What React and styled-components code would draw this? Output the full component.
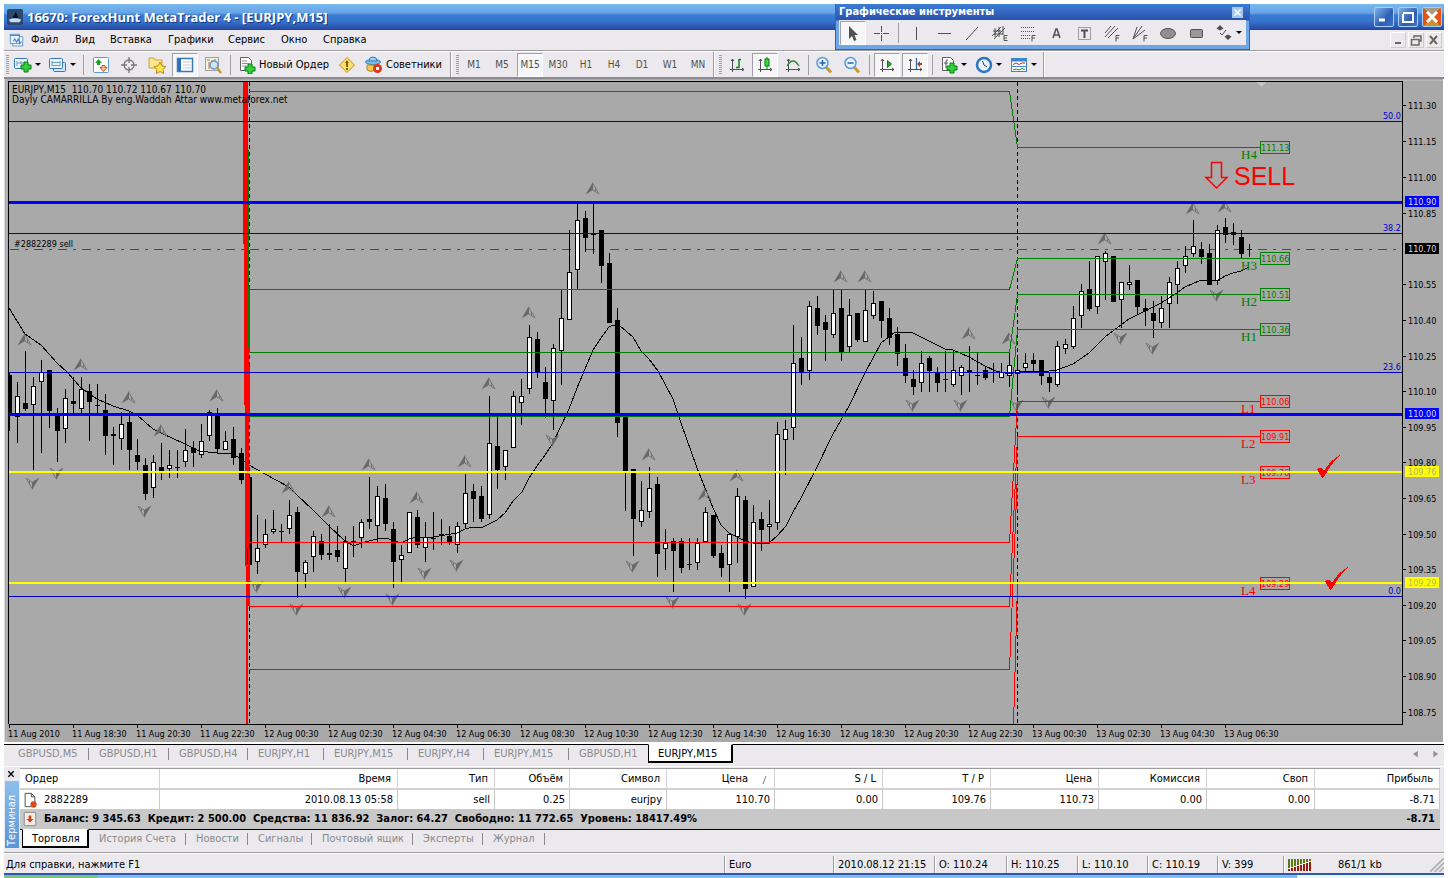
import React from 'react';
import styled, { createGlobalStyle, css } from 'styled-components';

const Global = createGlobalStyle`
  * { box-sizing: border-box; }
  body { margin: 0; background: #fff; }
  button { font: inherit; color: inherit; margin: 0; padding: 0; border: 0; background: none; }
`;

const UI_FONT = '"DejaVu Sans Condensed", "DejaVu Sans", sans-serif';
const FACE = '#ebe9ed';
const GREEN = '#008000';
const RED = '#ff0000';
const BLUE = '#0000cd';

/* ---------- window frame ---------- */
const Page = styled.div`
  position: relative;
  padding: 4px 4px 0;
  font: 11px/14px ${UI_FONT};
  color: #000;
  svg { display: block; flex: none; }
`;
const TitleBar = styled.header`
  display: flex;
  align-items: center;
  height: 26px;
  padding: 0 2px 0 3px;
  background: linear-gradient(#78b9ee 0, #66a3e8 9px, #3a7dd2 11px, #3874cc 17px, #2a52ad 24px, #1f4399 26px);
`;
const Title = styled.h1`
  flex: 1;
  margin: 0 0 0 4px;
  font: bold 13px/22px "Open Sans", sans-serif;
  color: #fff;
  text-shadow: 1px 1px 0 #123a80;
  white-space: pre;
`;
const WinButtons = styled.div`
  display: flex;
  gap: 4px;
`;
const WinButton = styled.button`
  display: grid;
  place-items: center;
  width: 20px;
  height: 20px;
  border: 1px solid #a9cdf2;
  border-radius: 2px;
  background: ${p => (p.$close ? 'conic-gradient(#a89a80 0 12%, #e05414 0 38%, #c9922c 0 62%, #e05414 0 88%, #a89a80 0)' : 'linear-gradient(135deg, #7fb0e6, #2c5fb4 60%, #3f74c4)')};
`;
const MenuBar = styled.nav`
  display: flex;
  align-items: center;
  height: 20px;
  padding-left: 5px;
  background: ${FACE};
`;
const MenuItems = styled.div`
  display: flex;
  flex: 1;
  margin-left: 1px;
`;
const MenuItem = styled.button`
  width: ${p => p.$w}px;
  padding-left: 6px;
  text-align: left;
  white-space: nowrap;
`;
const ChildButton = styled.button`
  display: grid;
  place-items: center;
  width: 16px;
  height: 16px;
  margin-right: 2px;
  border: 1px solid #fff;
  border-right-color: #ccc;
  border-bottom-color: #ccc;
`;

/* ---------- tool bars ---------- */
const ToolRow = styled.div`
  display: flex;
  height: 29px;
  padding-top: 1px;
  border-top: 1px solid #9c9c9c;
  border-bottom: 2px solid #8c8c90;
  background: ${FACE};
  box-shadow: inset 0 1px #fff;
`;
const ToolGroup = styled.div`
  display: flex;
  align-items: center;
  padding-right: ${p => p.$end || 0}px;
  border-right: 1px solid #9c9ca0;
  margin-right: 3px;
  box-shadow: 1px 0 #fff;
`;
const Grip = styled.span`
  width: 3px;
  height: 20px;
  margin: 0 1px 0 2px;
  background: repeating-linear-gradient(#a0a0a4 0 1px, transparent 1px 2px);
`;
const Divider = styled.span`
  width: 1px;
  height: 20px;
  margin: 0 ${p => (p.$tight ? 1 : 3)}px;
  background: #a0a0a4;
`;
const Tool = styled.button`
  display: flex;
  align-items: center;
  justify-content: ${p => (p.$start ? 'flex-start' : 'center')};
  gap: 3px;
  width: ${p => p.$w || 28}px;
  height: 24px;
  padding-left: ${p => (p.$start ? 4 : 0)}px;
  white-space: nowrap;
  ${p => p.$dim && css`
    font-size: 10px;
    color: #505050;
  `}
  ${p => p.$on && css`
    width: 26px;
    margin: 0 1px;
    border: 1px solid #a0a0a4;
    border-right-color: #fff;
    border-bottom-color: #fff;
    background: #f6f5f7;
  `}
`;
const Caret = styled.span`
  border: 3px solid transparent;
  border-top-color: #000;
  border-bottom-width: 0;
`;
const Palette = styled.section`
  position: absolute;
  top: 4px;
  right: 198px;
  width: 415px;
  padding: 0 3px 4px;
  border: 1px solid #2e64bc;
  border-top: 0;
  background: linear-gradient(#3a7dd2, #2a52ad 16px, #6ea6e6 17px);
`;
const PaletteHead = styled.div`
  display: flex;
  align-items: center;
  justify-content: space-between;
  height: 16px;
  font-weight: bold;
  color: #fff;
`;
const PaletteClose = styled.button`
  display: grid;
  place-items: center;
  width: 11px;
  height: 11px;
  margin-right: 3px;
  background: #a4c8f0;
`;
const PaletteBody = styled.div`
  display: flex;
  align-items: center;
  height: 25px;
  background: ${FACE};
`;

/* ---------- chart ---------- */
const ChartPane = styled.main`
  background: #a9a9a9;
  border-left: 1px solid #d8d8da;
  margin-right: 1px;
  svg { width: 100%; height: auto; }
`;

/* ---------- tabs ---------- */
const ChartTabs = styled.nav`
  display: flex;
  height: 22px;
  margin-top: 2px;
  padding-left: 4px;
  background: ${FACE};
  border-top: 1px solid #000;
  color: #8a8a8c;
`;
const TabButton = styled.button`
  width: ${p => p.$w}px;
  height: 18px;
  padding-left: 10px;
  text-align: left;
  white-space: nowrap;
  background: linear-gradient(#8a8a8c, #8a8a8c) right center / 1px 12px no-repeat;
  ${p => p.$bare && css`background: none;`}
  ${p => p.$on && css`
    height: 19px;
    margin-top: -1px;
    padding: 1px 0 0 9px;
    background: #fff;
    color: #000;
    border: 1px solid #000;
    border-top-color: #fff;
    border-right-width: 2px;
    border-bottom-width: 2px;
  `}
`;
const Spacer = styled.span`
  flex: 1;
`;
const Scrollers = styled.div`
  display: flex;
  align-items: center;
  gap: 8px;
  height: 18px;
  margin-right: 4px;
`;

/* ---------- terminal ---------- */
const Terminal = styled.section`
  display: flex;
  height: 86px;
  border-top: 1px solid #fff;
  background: ${FACE};
`;
const TerminalSide = styled.aside`
  display: flex;
  flex-direction: column;
  align-items: center;
  width: 16px;
  padding-top: 2px;
`;
const SideClose = styled.button`
  height: 9px;
  margin-right: 2px;
`;
const SideTitle = styled.div`
  width: 14px;
  height: 67px;
  margin: 3px 1px 0 0;
  padding-top: 2px;
  writing-mode: vertical-rl;
  transform: rotate(180deg);
  color: #fff;
  background: linear-gradient(#5a94d6, #8cc0ee);
`;
const TerminalBody = styled.div`
  flex: 1;
  margin: 1px 4px 0 0;
  border-top: 1px solid #9c9c9c;
`;
const Orders = styled.table`
  width: 100%;
  table-layout: fixed;
  border-collapse: separate;
  border-spacing: 0;
  background: #fff;
  white-space: nowrap;
`;
const Head = styled.th`
  height: 21px;
  padding: 0 ${p => (p.$sorted ? 26 : 6)}px 0 5px;
  font-weight: normal;
  text-align: ${p => (p.$left ? 'left' : 'right')};
  border-right: 1px solid #d4d0d4;
  border-bottom: 2px solid #d4d0d4;
`;
const Cell = styled.td`
  height: 19px;
  padding: 0 4px 0 2px;
  text-align: right;
  border-right: 1px solid #c8c8c8;
`;
const Sum = styled.td`
  height: 21px;
  padding: 0 5px 0 2px;
  font-weight: bold;
  text-align: ${p => (p.$right ? 'right' : 'left')};
  background: #c8c8c8;
  border-bottom: 1px solid #000;
`;
const WithIcon = styled.div`
  display: flex;
  align-items: center;
  gap: 6px;
`;
const SortMark = styled.svg`
  float: right;
  margin: 4px -20px 0 0;
`;
const BottomTabs = styled.nav`
  display: flex;
  margin-left: 2px;
  color: #8a8a8c;
`;
const StatusBar = styled.footer`
  display: flex;
  align-items: center;
  height: 21px;
  padding-top: 3px;
  border-top: 1px solid #9c9c9c;
  background: ${FACE};
  box-shadow: inset 0 1px #fff;
`;
const Hint = styled.span`
  flex: 1;
  padding-left: 2px;
`;
const Field = styled.span`
  display: flex;
  align-items: center;
  width: ${p => p.$w}px;
  height: 17px;
  padding-left: 4px;
  white-space: nowrap;
  border-left: 1px solid #9c9c9c;
  box-shadow: inset 1px 0 #fff;
`;
const Traffic = styled.span`
  margin-left: 26px;
`;
const Shelf = styled.div`
  height: 5px;
  border-top: 2px solid #2a58b4;
  background: linear-gradient(90deg, #7cc47c 0 94px, #84bcec 94px calc(100% - 147px), #eaf6fc 0);
`;

/* ---------- chart data: [high, body top, body bottom, low, kind] ---------- */
const CANDLES = [
  [372,375,413,431,'B'],[382,396,417,443,'W'],[351,403,409,411,'B'],[377,386,405,470,'W'],[360,372,382,453,'W'],
  [370,370,411,428,'B'],[408,414,431,462,'B'],[389,398,429,443,'W'],[377,401,404,413,'B'],[377,389,409,413,'W'],
  [384,391,402,441,'B'],[384,405,406,413,'B'],[394,410,436,455,'B'],[427,434,436,465,'B'],[412,424,439,450,'W'],
  [411,422,450,470,'B'],[439,455,462,470,'B'],[458,465,494,500,'B'],[455,462,488,498,'W'],[443,467,471,480,'B'],
  [450,465,469,478,'W'],[450,467,468,478,'B'],[429,450,462,467,'W'],[441,448,453,467,'B'],[424,441,455,458,'W'],
  [410,412,436,441,'W'],[408,414,449,453,'B'],[431,441,450,450,'W'],[427,439,458,465,'B'],[448,453,480,484,'B'],
  [477,477,565,565,'B'],[515,548,562,574,'W'],[519,534,545,548,'W'],[510,529,532,534,'W'],[524,531,532,543,'B'],
  [500,515,529,534,'W'],[507,512,572,598,'B'],[560,562,574,588,'W'],[531,536,557,572,'W'],[534,541,555,560,'B'],
  [524,553,555,560,'B'],[526,550,557,562,'B'],[536,541,569,582,'W'],[526,541,543,557,'B'],[519,522,538,548,'W'],
  [477,519,522,529,'B'],[486,496,526,543,'W'],[484,498,524,531,'B'],[522,529,562,588,'B'],[545,555,560,582,'W'],
  [512,512,553,553,'W'],[510,517,545,548,'B'],[522,537,548,562,'W'],[512,538,539,550,'B'],[519,534,536,545,'B'],
  [526,536,543,545,'B'],[522,526,545,553,'W'],[474,493,524,529,'W'],[484,491,499,522,'B'],[486,496,519,522,'B'],
  [396,443,515,519,'W'],[416,446,470,489,'B'],[450,450,467,480,'W'],[391,396,448,448,'W'],[379,396,403,425,'W'],
  [325,337,389,394,'W'],[332,339,372,378,'B'],[367,382,399,418,'B'],[344,348,401,430,'W'],[290,318,351,385,'W'],
  [230,272,320,320,'W'],[204,220,270,289,'W'],[211,218,238,252,'B'],[204,234,235,254,'B'],[230,230,266,283,'B'],
  [253,263,323,323,'B'],[308,320,423,437,'B'],[416,416,471,511,'B'],[469,469,519,556,'B'],[481,510,522,527,'W'],
  [467,488,512,518,'W'],[477,484,554,577,'B'],[529,543,549,570,'W'],[538,541,551,592,'B'],[538,541,568,573,'B'],
  [538,564,565,570,'B'],[538,543,563,570,'W'],[507,512,542,542,'W'],[515,515,556,558,'B'],[545,553,568,577,'B'],
  [534,534,565,592,'W'],[488,496,537,563,'W'],[496,500,589,599,'B'],[505,522,587,587,'W'],[512,519,530,551,'B'],
  [500,524,527,544,'W'],[422,434,523,530,'W'],[420,429,440,475,'W'],[325,363,428,440,'W'],[337,358,373,385,'B'],
  [301,306,371,380,'W'],[296,308,326,335,'B'],[315,322,330,361,'B'],[290,313,335,338,'W'],[290,308,352,361,'B'],
  [299,315,347,352,'W'],[313,313,340,342,'B'],[290,310,342,342,'W'],[291,303,316,319,'W'],[301,301,321,338,'B'],
  [308,318,338,345,'B'],[327,334,354,366,'B'],[344,358,376,383,'B'],[370,379,387,395,'B'],[351,363,383,392,'W'],
  [356,358,371,392,'B'],[367,373,383,392,'B'],[351,379,380,392,'B'],[351,370,385,387,'W'],[365,367,376,395,'W'],
  [346,370,373,392,'B'],[353,375,376,385,'B'],[366,370,378,380,'B'],[363,372,373,383,'B'],[363,372,378,378,'W'],
  [353,365,376,387,'W'],[356,370,374,395,'W'],[353,363,368,372,'W'],[353,360,364,372,'B'],[360,360,376,385,'B'],
  [372,377,383,392,'B'],[341,346,385,387,'W'],[339,344,349,354,'W'],[306,318,347,349,'W'],[284,291,316,328,'W'],
  [261,289,309,311,'B'],[256,256,307,314,'W'],[251,253,262,300,'W'],[256,256,302,302,'B'],[282,282,300,328,'W'],
  [265,282,285,290,'W'],[280,280,307,314,'B'],[299,308,311,326,'B'],[301,313,321,338,'B'],[296,308,323,328,'W'],
  [277,282,304,328,'W'],[261,268,285,304,'W'],[246,256,266,273,'W'],[220,246,254,257,'W'],[242,249,257,264,'B'],
  [244,253,285,285,'B'],[225,230,281,285,'W'],[218,227,235,243,'B'],[223,232,235,245,'B'],[230,237,254,258,'B'],
  [244,249,250,257,'B'],
];
const AVERAGE = '9,308 25,334 41,345 57,363 67,372 81,388 97,399 113,406 129,411 137,415 153,429 161,433 185,444 199,451 217,453 233,454 241,459 249,465 265,474 289,487 297,495 313,510 329,526 345,541 354,546 361,543 377,539 385,538 393,540 401,543 409,539 417,537 433,537 457,533 465,529 473,527 483,527 497,520 505,513 513,501 522,492 529,478 537,466 545,455 553,443 561,426 569,409 577,388 593,350 601,338 609,327 613,325 620,326 633,337 641,351 649,359 658,371 673,399 681,423 697,468 713,508 721,525 729,533 737,537 745,541 753,543 761,544 769,543 777,536 786,526 793,512 801,498 817,467 833,434 849,406 865,373 881,343 895,332 903,332 913,333 929,341 945,349 953,350 969,357 985,366 996,371 1009,374 1025,371 1049,371 1057,370 1065,367 1073,364 1089,353 1105,337 1121,325 1129,319 1145,311 1161,303 1177,293 1185,287 1201,280 1217,281 1225,276 1233,273 1241,271 1249,267';
const TOPS = [[24,333],[80,358],[128,391],[160,424],[216,389],[288,481],[328,505],[368,458],[416,491],[464,455],[488,377],[528,306],[592,182],[648,448],[704,488],[736,469],[840,270],[864,270],[968,327],[1008,332],[1104,232],[1192,202],[1224,200]];
const BOTTOMS = [[32,490],[56,480],[144,518],[256,593],[296,616],[344,599],[392,606],[424,580],[456,572],[552,447],[632,573],[672,609],[744,616],[912,412],[960,412],[1016,412],[1048,409],[1120,345],[1152,355],[1216,302]];
const LEVELS = [
  ['H4','111.13',147,91,GREEN],['H3','110.66',258,289,GREEN],['H2','110.51',294,352,GREEN],['H1','110.36',329,416,GREEN],
  ['L1','110.06',401,542,RED],['L2','109.91',436,606,RED],['L3','109.76',472,669,RED],['L4','109.29',583,867,RED],
];
const PRICES = [['111.30',105],['111.15',141],['111.00',177],['110.85',213],['110.55',284],['110.40',320],['110.25',356],['110.10',391],['109.95',427],['109.80',462],['109.65',498],['109.50',534],['109.35',569],['109.20',605],['109.05',640],['108.90',676],['108.75',712]];
const BADGES = [['110.90',202,'#0000ff'],['110.70',249,'#000'],['110.00',414,'#0000ff'],['109.76',472,'#ffff00'],['109.29',583,'#ffff00']];
const TIMES = ['11 Aug 2010','11 Aug 18:30','11 Aug 20:30','11 Aug 22:30','12 Aug 00:30','12 Aug 02:30','12 Aug 04:30','12 Aug 06:30','12 Aug 08:30','12 Aug 10:30','12 Aug 12:30','12 Aug 14:30','12 Aug 16:30','12 Aug 18:30','12 Aug 20:30','12 Aug 22:30','13 Aug 00:30','13 Aug 02:30','13 Aug 04:30','13 Aug 06:30'];
const FIBS = [['50.0',121],['38.2',233],['23.6',372],['0.0',596]];

function Candle({ x, data }) {
  const [high, top, bottom, low, kind] = data;
  const thin = bottom - top <= 1;
  return (
    <g>
      <rect x={x} y={high} width="1" height={Math.max(low - high, 1)} fill="#000" />
      <rect x={x - 2} y={top} width="5" height={thin ? 1 : bottom - top} fill="#000" />
      {kind === 'W' && <rect x={x - 1} y={top + 1} width="3" height={bottom - top - 2} fill="#fff" />}
    </g>
  );
}

function Fractal({ x, y, down }) {
  return (
    <g transform={`translate(${x + 0.5} ${y})${down ? ' rotate(180)' : ''}`} shapeRendering="geometricPrecision">
      <path d="M.5 0L-7 12.500L.5 8Z" fill="#696969" />
      <path d="M.5 1.500L6.500 12L.5 8M3 6v3" fill="none" stroke="#747474" />
    </g>
  );
}

function Chart() {
  return (
    <svg viewBox="5 79 1438 663" fontFamily={UI_FONT} fontSize="9" shapeRendering="crispEdges">
      <rect x="8" y="80" width="1436" height="1" fill="#bcbcbc" />
      <rect x="6" y="80" width="1" height="662" fill="#b8b8bc" />
      <clipPath id="plot"><rect x="9" y="82" width="1393" height="642" /></clipPath>
      <g clipPath="url(#plot)">
        <path d="M10 249.500H1402" stroke={GREEN} strokeDasharray="9 6 3 6" />
        <path d="M249.500 82V724M1017.500 82V724" stroke="#000" strokeDasharray="4 3" />
        {CANDLES.map((c, i) => <Candle key={i} x={9 + i * 8} data={c} />)}
        <polyline points={AVERAGE} fill="none" stroke="#000" />
        {TOPS.map(([x, y]) => <Fractal key={`${x}`} x={x} y={y} />)}
        {BOTTOMS.map(([x, y]) => <Fractal key={`${x}`} x={x} y={y} down />)}
        <g fill="none">
          <path d="M246 82L249 420M247 82L249 352" stroke={GREEN} strokeWidth="2" />
          <path d="M243.500 82L247.500 724M244.500 82L249 606M245.500 82L249 542" stroke={RED} strokeWidth="2" />
          {LEVELS.map(([name, , now, before, color]) => (
            <path key={name} stroke={color} d={`M249 ${before + 0.5}H1009.500L1017.500 ${now + 0.5}H1260`} />
          ))}
        </g>
        {FIBS.map(([t, y]) => <rect key={t} x="9" y={y} width="1393" height="1" fill={BLUE} />)}
        {LEVELS.map(([name, price, y, , color]) => (
          <g key={name} fill={color}>
            <rect x="1260.500" y={y - 5.5} width="29" height="12" fill="none" stroke={color} />
            <text x="1261" y={y + 4}>{price}</text>
            <text x="1241" y={y + 12} fontFamily='"Liberation Serif", serif' fontSize="13">{name}</text>
          </g>
        ))}
        <rect x="9" y="201" width="1393" height="3" fill="#0000ff" />
        <rect x="9" y="413" width="1393" height="3" fill="#0000ff" />
        <rect x="9" y="471" width="1393" height="2" fill="#ffff00" />
        <rect x="9" y="582" width="1393" height="2" fill="#ffff00" />
        <path d="M1256 82h10l-5 5Z" fill="#c4c4c4" />
        <path d="M1211.500 162.500h10v15h5.500L1216.500 188L1206 177.500h5.500Z" fill="none" stroke={RED} strokeWidth="1.500" shapeRendering="geometricPrecision" />
        <text x="1234" y="185" fill={RED} fontSize="25" fontFamily='"Liberation Sans", sans-serif'>SELL</text>
        <g fill={RED}>
          <path id="tick" d="M1317 469q2-2 4-1l3 3q6-11 18-17q-10 8-15 18q-2 4-5 6z" />
          <use href="#tick" x="8" y="112" />
        </g>
      </g>
      <path d="M8.500 724V81.500H1402.500V724.500H8.500" fill="none" stroke="#000" />
      {PRICES.map(([t, y]) => (
        <g key={t}><rect x="1402" y={y} width="4" height="1" /><text x="1408" y={y + 4}>{t}</text></g>
      ))}
      {BADGES.map(([t, y, bg]) => (
        <g key={t}>
          <rect x="1405" y={y - 6} width="34" height="11" fill={bg} />
          <text x="1408" y={y + 3} fill={bg === '#ffff00' ? '#b4b46c' : '#dcdcdc'}>{t}</text>
        </g>
      ))}
      {TIMES.map((t, i) => (
        <g key={i}><rect x={9 + i * 64} y="724" width="1" height="4" /><text x={8 + i * 64} y="737">{t}</text></g>
      ))}
      {FIBS.map(([t, y]) => <text key={t} x="1401" y={y - 2} fill={BLUE} textAnchor="end">{t}</text>)}
      <text x="12" y="93" fontSize="10">EURJPY,M15&nbsp; 110.70 110.72 110.67 110.70</text>
      <text x="12" y="103" fontSize="10">Dayly CAMARRILLA By eng.Waddah Attar www.metaforex.net</text>
      <text x="14" y="247">#2882289 sell</text>
    </svg>
  );
}

/* ---------- icons, drawn on an 18-unit grid ---------- */
const G = '#505050';
const plus = (x, y) => <path d={`M${x + 3} ${y}h4v3h3v4h-3v3h-4v-3h-3v-4h3Z`} fill="#2fd03a" stroke="#0a7a14" strokeWidth="1" />;
const axes = <path d="M4.500 3v13M2 13.500h14M3 5l1.500-2L6 5M14 12l2 1.500L14 15" fill="none" stroke={G} />;
const ICONS = {
  newChart: <><rect x=".5" y="2.500" width="13" height="10" rx="1" fill="#e8f3fc" stroke="#3a78b4" /><path d="M3 5v5M3 7h8M7 5v3" stroke="#6a9ac8" fill="none" />{plus(7, 6)}</>,
  profiles: <><rect x="4.500" y="6.500" width="12" height="9" rx="1" fill="#cfe4f8" stroke="#3a78b4" /><rect x=".5" y="2.500" width="13" height="10" rx="1" fill="#e8f3fc" stroke="#3a78b4" /><path d="M3 5v5M3 6.500h8M3 9.500h8M11 5v5" stroke="#6a9ac8" fill="none" /></>,
  market: <><rect x="1.500" y="1.500" width="15" height="15" rx="1" fill="#fff" stroke="#5a9ad0" /><path d="M6.500 3l3.500 4h-2v2H5v-2H3Z" fill="#1fa02a" /><path d="M11.500 15.500L8 11.500h2v-2h3v2h2Z" fill="#f4c0a0" stroke="#d0501a" /></>,
  cross: <g fill="none" stroke="#787878"><circle cx="9" cy="9" r="5" strokeWidth="1.300" /><path d="M9 1v6M9 11v6M1 9h6M11 9h6" strokeWidth="1.300" /></g>,
  folder: <><path d="M1 2h5l1 2h7v8H1Z" fill="#fbe88e" stroke="#c4a43c" /><path d="M12 6l2 4 4 .5-3 3 .8 4L12 15.500 8.200 17.500l.8-4-3-3L10 10Z" fill="#ffe64a" stroke="#b88a10" /></>,
  list: <><rect x="1.500" y="2.500" width="15" height="13" fill="#fff" stroke="#3a78b4" strokeWidth="1.500" /><rect x="2" y="3" width="3" height="12" fill="#2f6eb8" /><path d="M7 6h8M7 9h8M7 12h8" stroke="#c4ccd8" /></>,
  tester: <><rect x="1.500" y="1.500" width="13" height="13" fill="#f4f0e4" stroke="#a0a0a0" /><path d="M3 4h3M8 4v6M5 6v7M11 3v4" stroke="#b07050" /><circle cx="10" cy="9" r="4" fill="#cce4fa" stroke="#6a94bc" strokeWidth="1.500" /><path d="M13 12l4 5" stroke="#c8962a" strokeWidth="2.500" /></>,
  order: <><path d="M2.500 1.500h8l3 3v10h-11Z" fill="#fff" stroke="#606060" /><path d="M4 5h5M4 7.500h7M4 10h5" stroke="#909090" />{plus(7, 8)}</>,
  diamond: <><path d="M9 1.500l7.500 7.500L9 16.500 1.500 9Z" fill="#fbe070" stroke="#b8921a" /><path d="M9 4l2 3H7ZM8 7h2v4H8ZM8 12h2v2H8Z" fill="#8a5a00" /></>,
  advisor: <><ellipse cx="8" cy="6" rx="7.500" ry="2.500" fill="#7cbcec" stroke="#2a7ac0" /><path d="M4 5q0-4 4-4t4 4Z" fill="#9ad0f4" stroke="#2a7ac0" /><path d="M2 9h8v5q-4 3-8 0Z" fill="#f4c84c" stroke="#b08820" /><circle cx="12.500" cy="12.500" r="4.500" fill="#d83a1c" /><rect x="11" y="11" width="3" height="3" fill="#fff" /></>,
  bars: <>{axes}<path d="M11 3v9M11 3.500h2M8 11.500h3" stroke="#0a8a14" strokeWidth="1.500" fill="none" /></>,
  candles: <>{axes}<path d="M11 1v12" stroke="#0a7a14" /><rect x="9" y="3" width="4" height="7" fill="#2ee03a" stroke="#0a7a14" /></>,
  line: <>{axes}<path d="M3 10q3-5 6-5t6 5" fill="none" stroke="#2a8a34" strokeWidth="1.300" /></>,
  zoomIn: <><path d="M11 11l5 5.500" stroke="#c89c2c" strokeWidth="3" /><circle cx="7.500" cy="7" r="5.500" fill="#e4f2fe" stroke="#5a9ad8" strokeWidth="1.500" /><path d="M4.500 7h6M7.500 4v6" stroke="#2a62b0" strokeWidth="1.500" /></>,
  zoomOut: <><path d="M11 11l5 5.500" stroke="#c89c2c" strokeWidth="3" /><circle cx="7.500" cy="7" r="5.500" fill="#e4f2fe" stroke="#5a9ad8" strokeWidth="1.500" /><path d="M4.500 7h6" stroke="#2a62b0" strokeWidth="1.500" /></>,
  scroll: <>{axes}<path d="M9.500 4.500l4 3.500-4 3.500Z" fill="#1fb02a" stroke="#0a7a14" /></>,
  shift: <>{axes}<path d="M10.500 2v11" stroke="#3a6aa0" strokeWidth="1.300" /><path d="M11 8l3-3v2h2v2h-2v2Z" fill="#a0401c" /></>,
  indicator: <><path d="M2.500 1.500h8l3 3v10h-11Z" fill="#fff" stroke="#606060" /><path d="M8 4q-2-1-2 2v6M4 7h4" stroke="#505050" fill="none" />{plus(7, 7)}</>,
  clock: <><circle cx="9" cy="9" r="7" fill="#e8f4fe" stroke="#2f74c0" strokeWidth="2.500" /><path d="M9 9l3 2M9 9L7.500 5" stroke="#404040" fill="none" /></>,
  template: <><rect x="1.500" y="2.500" width="15" height="13" fill="#fff" stroke="#3a86cc" /><path d="M1 4h16" stroke="#3a86cc" strokeWidth="3" /><path d="M3 8.500l3-1.500 3 1.500 3-1.500h3" stroke="#b03020" fill="none" /><path d="M1 10.500h16" stroke="#3a86cc" /><path d="M3 14l3-1 3 1 3-1.500 3 1" stroke="#2a8a34" fill="none" /></>,
  arrow: <path d="M5 2v13l3-3 2 5 2.500-1-2-5H14Z" fill={G} />,
  plusCross: <path d="M9.500 2v6M9.500 11v6M2 9.500h6M11 9.500h6M9 9.500h1" stroke={G} />,
  vline: <path d="M9.500 3v13" stroke={G} />,
  hline: <path d="M3 9.500h13" stroke={G} />,
  trend: <path d="M3 16L15 3" stroke={G} />,
  channel: <><path d="M1 12l9-9M3 15L14 4M2 7h8M4 4v9M8 3v10M12 2v9M3 10h9" stroke={G} fill="none" /><path d="M16.500 11.500h-3.500v5h3.500M13 14h3" stroke={G} fill="none" /></>,
  fibo: <><path d="M2 3.500h14M2 7.500h14M2 11.500h9M2 14.500h9" stroke={G} strokeDasharray="1 1" /><path d="M16.500 11.500h-3.500v6M13 14h3" stroke={G} fill="none" /></>,
  letter: <path d="M6 14L9 5h1l3 9M7 11h5" stroke={G} strokeWidth="1.500" fill="none" />,
  label: <><rect x="3.500" y="3.500" width="12" height="12" fill="none" stroke={G} strokeDasharray="1 1" /><path d="M6 6.500h7M9.500 6v8" stroke={G} strokeWidth="2" /></>,
  fan: <><path d="M2 13L12 2M5 14L15 4M2 9L8 2" stroke={G} /><path d="M16.500 11.500h-3.500v6M13 14h3" stroke={G} fill="none" /></>,
  pitch: <><path d="M2 15L6 3M2 15L11 2M2 15L14 6" stroke={G} /><path d="M16.500 11.500h-3.500v6M13 14h3" stroke={G} fill="none" /></>,
  ellipse: <ellipse cx="9" cy="9.500" rx="7.500" ry="5" fill="#909090" stroke={G} />,
  rect: <rect x="3.500" y="5.500" width="12" height="8" rx="1" fill="#989898" stroke={G} />,
  shapes: <><path d="M5 1l3.500 3.500L5 6.500 1.500 4.500ZM13 16l-3.500-3.500 3.500-2 3.500 2Z" fill={G} /><path d="M5 9l2 2 4-5" fill="none" stroke={G} /></>,
  app: <><rect width="18" height="18" fill="#2c4a70" rx="2" /><path d="M2 12q7-3 14 0l-2 3H4Z" fill="#c8dce8" /><path d="M10 3l-4 7h7Z" fill="#0a1420" /></>,
  chartWin: <><rect x="4.500" y="4.500" width="12" height="11" fill="#fff" stroke="#4a8ac8" /><rect x="1.500" y="1.500" width="11" height="11" fill="#e8f3fc" stroke="#4a8ac8" /><path d="M1 3h12M5 10l2-3 2 4 2-4 2 6 2-3" stroke="#4a8ac8" strokeWidth="1.300" fill="none" /></>,
  sheet: <><path d="M3.500 1.500h7l4 4v11h-11Z" fill="#fff" stroke="#404040" /><path d="M10.500 1.500v4h4" fill="none" stroke="#404040" /><circle cx="13" cy="14" r="3.500" fill="#d84a18" /></>,
  balance: <><rect x="2.500" y="1.500" width="13" height="15" rx="1" fill="#f0ece4" stroke="#808080" /><path d="M7.500 5h3v4H13l-4 4-4-4h2.500Z" fill="#c8481c" /></>,
};
const Icon = ({ n, s = 18 }) => <svg width={s} height={s} viewBox="0 0 18 18" aria-hidden="true">{ICONS[n]}</svg>;
const Glyph = ({ d, c = '#fff', w = 2, s = 12 }) => (
  <svg width={s} height={s} viewBox="0 0 12 12" aria-hidden="true"><path d={d} fill="none" stroke={c} strokeWidth={w} /></svg>
);
const ToolIcon = ({ n, drop, ...rest }) => (
  <Tool {...rest} aria-label={n}><Icon n={n} />{drop && <Caret />}</Tool>
);

const MENU = [['Файл', 44], ['Вид', 35], ['Вставка', 58], ['Графики', 60], ['Сервис', 53], ['Окно', 42], ['Справка', 60]];
const PERIODS = ['M1', 'M5', 'M15', 'M30', 'H1', 'H4', 'D1', 'W1', 'MN'];
const TABS = [['GBPUSD,M5', 81], ['GBPUSD,H1', 80], ['GBPUSD,H4', 79], ['EURJPY,H1', 76], ['EURJPY,M15', 84], ['EURJPY,H4', 76], ['EURJPY,M15', 85], ['GBPUSD,H1', 79]];
const PANES = [['История Счета', 97], ['Новости', 62], ['Сигналы', 64], ['Почтовый ящик', 101], ['Эксперты', 70], ['Журнал', 62]];
const COLUMNS = [['Ордер', 140], ['Время', 238], ['Тип', 97], ['Объём', 75], ['Символ', 97], ['Цена', 108], ['S / L', 108], ['T / P', 108], ['Цена', 108], ['Комиссия', 108], ['Своп', 108], ['Прибыль', 0]];
const ORDER = ['2010.08.13 05:58', 'sell', '0.25', 'eurjpy', '110.70', '0.00', '109.76', '110.73', '0.00', '0.00', '-8.71'];
const FIELDS = [['Euro', 109], ['2010.08.12 21:15', 101], ['O: 110.24', 72], ['H: 110.25', 71], ['L: 110.10', 70], ['C: 110.19', 70], ['V: 399', 66]];

export default function App() {
  return (
    <Page>
      <Global />
      <TitleBar>
        <Icon n="app" s={16} />
        <Title>16670: ForexHunt MetaTrader 4 - [EURJPY,M15]</Title>
        <WinButtons>
          <WinButton aria-label="Minimize"><Glyph d="M1 9h6" w={3} /></WinButton>
          <WinButton aria-label="Restore"><Glyph d="M1 3v8h10V2H1" /></WinButton>
          <WinButton $close aria-label="Close"><Glyph d="M1 1l10 10M11 1L1 11" w={3} /></WinButton>
        </WinButtons>
      </TitleBar>

      <MenuBar>
        <Icon n="chartWin" s={15} />
        <MenuItems>{MENU.map(([t, w]) => <MenuItem key={t} $w={w}>{t}</MenuItem>)}</MenuItems>
        <ChildButton aria-label="Minimize chart"><Glyph d="M3 9h6" c="#6a6a60" /></ChildButton>
        <ChildButton aria-label="Restore chart"><Glyph d="M4 4V2h7v5H9M1 5.500h8V11H1.500V5" c="#6a6a60" w={1.5} /></ChildButton>
        <ChildButton aria-label="Close chart"><Glyph d="M2 2l7 8M9 2L2 10" c="#6a6a60" /></ChildButton>
      </MenuBar>

      <ToolRow>
        <ToolGroup>
          <Grip />
          <ToolIcon n="newChart" drop $w={35} />
          <ToolIcon n="profiles" drop $w={35} />
          <Divider />
          <ToolIcon n="market" />
          <ToolIcon n="cross" />
          <ToolIcon n="folder" />
          <ToolIcon n="list" $on />
          <ToolIcon n="tester" />
          <Divider />
          <Tool $w={99} $start><Icon n="order" />Новый Ордер</Tool>
          <ToolIcon n="diamond" />
          <Tool $w={89} $start><Icon n="advisor" />Советники</Tool>
        </ToolGroup>
        <ToolGroup $end={1}>
          <Grip />
          {PERIODS.map(t => <Tool key={t} $dim $on={t === 'M15'}>{t}</Tool>)}
        </ToolGroup>
        <ToolGroup $end={2}>
          <Grip />
          <ToolIcon n="bars" />
          <ToolIcon n="candles" $on />
          <ToolIcon n="line" />
          <Divider $tight />
          <ToolIcon n="zoomIn" />
          <ToolIcon n="zoomOut" />
          <Divider />
          <ToolIcon n="scroll" $on />
          <ToolIcon n="shift" $on />
          <Divider />
          <ToolIcon n="indicator" drop $w={35} />
          <ToolIcon n="clock" drop $w={35} />
          <ToolIcon n="template" drop $w={35} />
        </ToolGroup>
      </ToolRow>

      <ChartPane><Chart /></ChartPane>

      <ChartTabs>
        {TABS.map(([t, w], i) => <TabButton key={i} $w={w} $bare={i === TABS.length - 1}>{t}</TabButton>)}
        <TabButton $on $w={85}>EURJPY,M15</TabButton>
        <Spacer />
        <Scrollers>
          <button aria-label="Scroll left"><Glyph d="M6 4L3 6l3 2Z" c="#909090" s={10} /></button>
          <button aria-label="Scroll right"><Glyph d="M5 4l3 2-3 2Z" c="#909090" s={10} /></button>
        </Scrollers>
      </ChartTabs>

      <Terminal>
        <TerminalSide>
          <SideClose aria-label="Close terminal"><Glyph d="M2 2l8 8M10 2l-8 8" c="#000" s={8} /></SideClose>
          <SideTitle>Терминал</SideTitle>
        </TerminalSide>
        <TerminalBody>
          <Orders>
            <colgroup>{COLUMNS.map(([, w], i) => <col key={i} width={w || undefined} />)}</colgroup>
            <thead>
              <tr>
                {COLUMNS.map(([t], i) => (
                  <Head key={i} $left={i === 0} $sorted={i === 5}>
                    {i === 5 && <SortMark width="6" height="8" viewBox="0 0 6 8"><path d="M1 8L4 0" stroke="#808080" /></SortMark>}
                    {t}
                  </Head>
                ))}
              </tr>
            </thead>
            <tbody>
              <tr>
                <Cell><WithIcon><Icon n="sheet" s={16} />2882289</WithIcon></Cell>
                {ORDER.map((t, i) => <Cell key={i}>{t}</Cell>)}
              </tr>
              <tr>
                <Sum colSpan={11}>
                  <WithIcon>
                    <Icon n="balance" s={16} />
                    Баланс: 9 345.63&nbsp; Кредит: 2 500.00&nbsp; Средства: 11 836.92&nbsp; Залог: 64.27&nbsp; Свободно: 11 772.65&nbsp; Уровень: 18417.49%
                  </WithIcon>
                </Sum>
                <Sum $right>-8.71</Sum>
              </tr>
            </tbody>
          </Orders>
          <BottomTabs>
            <TabButton $on $w={67}>Торговля</TabButton>
            {PANES.map(([t, w]) => <TabButton key={t} $w={w}>{t}</TabButton>)}
          </BottomTabs>
        </TerminalBody>
      </Terminal>

      <StatusBar>
        <Hint>Для справки, нажмите F1</Hint>
        {FIELDS.map(([t, w]) => <Field key={t} $w={w}>{t}</Field>)}
        <Field $w={161}>
          <svg width="24" height="12" viewBox="0 0 24 12" aria-hidden="true">
            {[0, 3, 6, 9, 12, 15, 18, 21].map((x, i) => (
              <g key={x}>
                <rect x={x} y="0" width="2" height={9 - i} fill="#5a7a10" />
                <rect x={x} y={10 - i} width="2" height={2 + i} fill="#981c0c" />
              </g>
            ))}
          </svg>
          <Traffic>861/1 kb</Traffic>
          <Spacer />
          <Glyph d="M0 12L12 0M4 12l8-8M8 12l4-4" c="#b0b0b4" w={1.5} s={14} />
        </Field>
      </StatusBar>
      <Shelf />

      <Palette>
        <PaletteHead>
          Графические инструменты
          <PaletteClose aria-label="Close palette"><Glyph d="M2 2l8 8M10 2l-8 8" s={9} /></PaletteClose>
        </PaletteHead>
        <PaletteBody>
          <ToolIcon n="arrow" $on />
          <ToolIcon n="plusCross" />
          <Divider />
          {['vline', 'hline', 'trend', 'channel', 'fibo', 'letter', 'label', 'fan', 'pitch', 'ellipse', 'rect'].map(n => <ToolIcon key={n} n={n} />)}
          <ToolIcon n="shapes" drop $w={36} />
        </PaletteBody>
      </Palette>
    </Page>
  );
}
